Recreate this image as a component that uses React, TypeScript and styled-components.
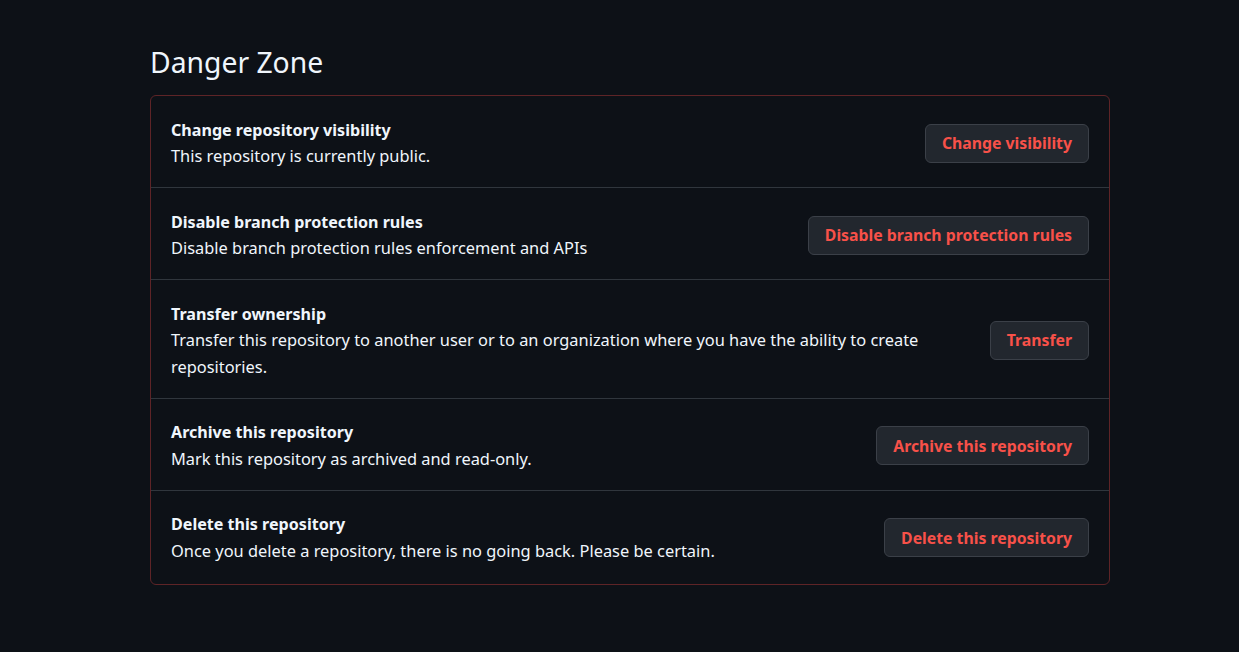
import React from "react";
import styled, { createGlobalStyle } from "styled-components";

const Global = createGlobalStyle`
  html, body { margin: 0; padding: 0; background: #0d1117; }
  body { font-family: "Noto Sans", "Open Sans", sans-serif; color: #e6edf3; }
`;

const Page = styled.div`
  width: 960px;
  margin-left: 150px;
  padding-top: 40px;
  padding-bottom: 60px;
`;

const Heading = styled.h2`
  margin: 0 0 11px 0;
  font-size: 28.3px;
  font-weight: 400;
  line-height: 44px;
  color: #f0f6fc;
`;

const Box = styled.div`
  border: 1px solid #5e2427;
  border-radius: 6px;
`;

const Row = styled.div`
  display: flex;
  align-items: center;
  justify-content: space-between;
  gap: 24px;
  padding: 20.5px 20px 17.5px 20px;
  & + & { border-top: 1px solid #30363d; }
  &:last-child { padding-bottom: 19.5px; }
`;

const Info = styled.div`
  flex: 1;
  min-width: 0;
`;

const Title = styled.div`
  font-size: 16.1px;
  font-weight: 700;
  line-height: 26.5px;
  color: #f0f6fc;
`;

const Desc = styled.p`
  margin: 0;
  font-size: 16.4px;
  line-height: 26.5px;
  color: #f0f6fc;
`;

const DangerButton = styled.button`
  flex: none;
  height: 39px;
  padding: 0 16px;
  border: 1px solid #3b4048;
  border-radius: 6px;
  background: #22272e;
  color: #f85149;
  font-family: inherit;
  font-size: 15.8px;
  font-weight: 700;
  cursor: pointer;
`;

const items = [
  { title: "Change repository visibility", desc: "This repository is currently public.", btn: "Change visibility" },
  { title: "Disable branch protection rules", desc: "Disable branch protection rules enforcement and APIs", btn: "Disable branch protection rules" },
  { title: "Transfer ownership", desc: "Transfer this repository to another user or to an organization where you have the ability to create repositories.", btn: "Transfer" },
  { title: "Archive this repository", desc: "Mark this repository as archived and read-only.", btn: "Archive this repository" },
  { title: "Delete this repository", desc: "Once you delete a repository, there is no going back. Please be certain.", btn: "Delete this repository" },
];

export default function App() {
  return (
    <>
      <Global />
      <Page>
        <Heading>Danger Zone</Heading>
        <Box>
          {items.map((it) => (
            <Row key={it.title}>
              <Info>
                <Title>{it.title}</Title>
                <Desc>{it.desc}</Desc>
              </Info>
              <DangerButton>{it.btn}</DangerButton>
            </Row>
          ))}
        </Box>
      </Page>
    </>
  );
}
